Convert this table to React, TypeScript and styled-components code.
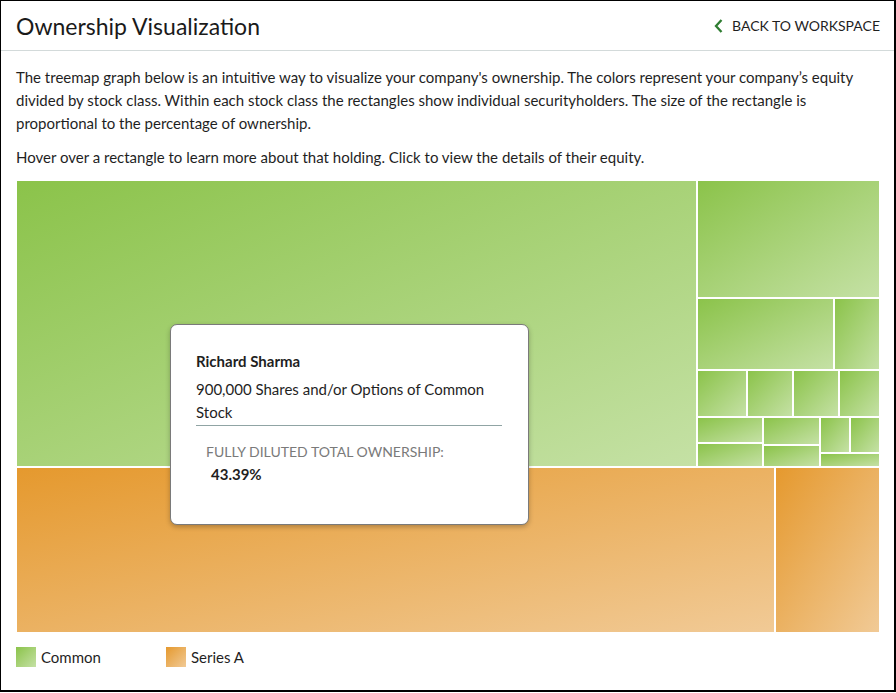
import styled, { createGlobalStyle } from "styled-components";

const GlobalStyle = createGlobalStyle`
  body {
    margin: 0;
    background: #fff;
    font-family: "Lato", "Noto Sans", sans-serif;
    color: #1f1f1f;
  }
`;

const Frame = styled.div`
  width: 896px;
  height: 692px;
  box-sizing: border-box;
  border-style: solid;
  border-color: #000;
  border-width: 1px 2px 2px 1px;
  background: #fff;
`;

const Header = styled.div`
  height: 49px;
  display: flex;
  align-items: center;
  justify-content: space-between;
  padding: 0 14px 0 15px;
  border-bottom: 1px solid #d3dada;
`;

const Title = styled.h1`
  margin: 0;
  font-size: 23px;
  font-weight: 400;
  color: #1a1a1a;
`;

const BackLink = styled.a`
  display: flex;
  align-items: center;
  gap: 8px;
  font-size: 14px;
  color: #1f1f1f;
  text-decoration: none;
  cursor: pointer;

  svg {
    width: 11px;
    height: 16px;
  }
`;

const Body = styled.div`
  padding: 15px 15px 0 15px;
`;

const Paragraph = styled.p`
  margin: 0 0 11px 0;
  font-size: 15px;
  line-height: 23px;
`;

const Map = styled.div`
  position: relative;
  width: 864px;
  height: 453px;
  display: flex;
  flex-direction: column;
  margin-top: 11px;
`;

type Kind = "common" | "seriesA";

const gradients: Record<Kind, string> = {
  common: "linear-gradient(to bottom right, #8bc34a, #c5e1a5)",
  seriesA: "linear-gradient(to bottom right, #e5992e, #f1ca96)",
};

const Row = styled.div<{ $size: number }>`
  display: flex;
  flex: 0 0 ${(p) => p.$size}px;
`;

const Col = styled.div<{ $size: number }>`
  display: flex;
  flex-direction: column;
  flex: 0 0 ${(p) => p.$size}px;
`;

const Tile = styled.div<{ $size: number; $kind: Kind }>`
  flex: 0 0 ${(p) => p.$size}px;
  box-sizing: border-box;
  border: 1px solid #fff;
  background: ${(p) => gradients[p.$kind]};
  cursor: pointer;
`;

const Tooltip = styled.div`
  position: absolute;
  left: 154px;
  top: 144px;
  width: 359px;
  height: 201px;
  box-sizing: border-box;
  padding: 25px 26px 0 25px;
  background: #fff;
  border: 1px solid #7a7a7a;
  border-radius: 7px;
  box-shadow: 0 2px 5px rgba(0, 0, 0, 0.25);
`;

const HolderName = styled.div`
  font-size: 15px;
  font-weight: 700;
  line-height: 23px;
  margin-bottom: 5px;
`;

const HolderShares = styled.div`
  font-size: 15px;
  line-height: 23px;
  padding-bottom: 1px;
  border-bottom: 1px solid #90a4a4;
`;

const OwnershipLabel = styled.div`
  margin: 15px 0 0 10px;
  font-size: 14px;
  line-height: 22px;
  color: #7a7a7a;
  text-transform: uppercase;
`;

const OwnershipValue = styled.div`
  margin-left: 15px;
  font-size: 15px;
  font-weight: 700;
  line-height: 22px;
`;

const Legend = styled.div`
  display: flex;
  margin-top: 14px;
`;

const LegendItem = styled.div`
  display: flex;
  align-items: center;
  gap: 5px;
  width: 150px;
  font-size: 15px;
`;

const Swatch = styled.span<{ $kind: Kind }>`
  width: 20px;
  height: 20px;
  background: ${(p) => gradients[p.$kind]};
`;

function ChevronLeft() {
  return (
    <svg viewBox="0 0 11 16" fill="none">
      <path d="M8.5 2 L3 8 L8.5 14" stroke="#2f7d32" strokeWidth="2.3" />
    </svg>
  );
}

export default function App() {
  return (
    <>
      <GlobalStyle />
      <Frame>
        <Header>
          <Title>Ownership Visualization</Title>
          <BackLink>
            <ChevronLeft />
            BACK TO WORKSPACE
          </BackLink>
        </Header>
        <Body>
          <Paragraph>
            The treemap graph below is an intuitive way to visualize your company's ownership. The
            colors represent your company’s equity divided by stock class. Within each stock class
            the rectangles show individual securityholders. The size of the rectangle is
            proportional to the percentage of ownership.
          </Paragraph>
          <Paragraph>
            Hover over a rectangle to learn more about that holding. Click to view the details of
            their equity.
          </Paragraph>
          <Map>
            <Row $size={287}>
              <Tile $kind="common" $size={681} />
              <Col $size={183}>
                <Tile $kind="common" $size={118} />
                <Row $size={72}>
                  <Tile $kind="common" $size={137} />
                  <Tile $kind="common" $size={46} />
                </Row>
                <Row $size={47}>
                  <Tile $kind="common" $size={50} />
                  <Tile $kind="common" $size={46} />
                  <Tile $kind="common" $size={46} />
                  <Tile $kind="common" $size={41} />
                </Row>
                <Row $size={50}>
                  <Col $size={66}>
                    <Tile $kind="common" $size={26} />
                    <Tile $kind="common" $size={24} />
                  </Col>
                  <Col $size={57}>
                    <Tile $kind="common" $size={28} />
                    <Tile $kind="common" $size={22} />
                  </Col>
                  <Col $size={60}>
                    <Row $size={36}>
                      <Tile $kind="common" $size={30} />
                      <Tile $kind="common" $size={30} />
                    </Row>
                    <Tile $kind="common" $size={14} />
                  </Col>
                </Row>
              </Col>
            </Row>
            <Row $size={166}>
              <Tile $kind="seriesA" $size={759} />
              <Tile $kind="seriesA" $size={105} />
            </Row>
            <Tooltip>
              <HolderName>Richard Sharma</HolderName>
              <HolderShares>900,000 Shares and/or Options of Common Stock</HolderShares>
              <OwnershipLabel>Fully Diluted Total Ownership:</OwnershipLabel>
              <OwnershipValue>43.39%</OwnershipValue>
            </Tooltip>
          </Map>
          <Legend>
            <LegendItem>
              <Swatch $kind="common" />
              Common
            </LegendItem>
            <LegendItem>
              <Swatch $kind="seriesA" />
              Series A
            </LegendItem>
          </Legend>
        </Body>
      </Frame>
    </>
  );
}
